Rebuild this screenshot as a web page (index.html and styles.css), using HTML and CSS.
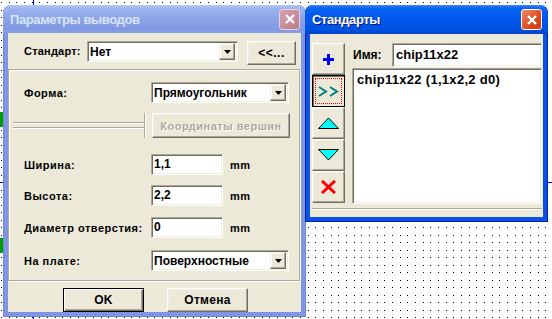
FILE: index.html
```html
<!DOCTYPE html>
<html lang="ru">
<head>
    <meta charset="UTF-8">
    <title>Параметры выводов</title>
    <link rel="stylesheet" href="styles.css">
</head>
<body>

<div class="desktop">
    <svg class="canvas" width="552" height="319">
        <line x1="33.5" y1="0" x2="33.5" y2="319" stroke="#0000ff"/>
        <line x1="0" y1="182.5" x2="552" y2="182.5" stroke="#0000ff"/>
        <rect x="0" y="112" width="4" height="15" fill="#00a000"/>
        <rect x="0" y="238" width="4" height="15" fill="#00a000"/>
    </svg>

    <!-- Параметры выводов (неактивное окно) -->
    <div class="window win-params inactive">
        <div class="titlebar">
            <span class="title">Параметры выводов</span>
            <span class="close">
                <svg width="10" height="10"><path d="M1 1L9 9M9 1L1 9" stroke="#fff" stroke-width="2.4"/></svg>
            </span>
        </div>
        <div class="client">
            <div class="std-row">
                <span class="label std-label">Стандарт:</span>
                <div class="combo combo-std">
                    <span class="combo-text">Нет</span>
                    <span class="combo-btn"><svg width="7" height="4"><path d="M0 0h7L3.5 4z"/></svg></span>
                </div>
                <button class="btn btn-back">&lt;&lt;...</button>
            </div>

            <div class="panel">
                <div class="row row-shape">
                    <span class="label wide">Форма:</span>
                    <div class="combo combo-wide">
                        <span class="combo-text">Прямоугольник</span>
                        <span class="combo-btn"><svg width="7" height="4"><path d="M0 0h7L3.5 4z"/></svg></span>
                    </div>
                </div>
                <div class="row row-coords">
                    <div class="etch">
                        <div class="etch-line"></div>
                        <div class="etch-line"></div>
                    </div>
                    <button class="btn btn-coords" disabled>Координаты вершин</button>
                </div>
                <div class="row row-width">
                    <span class="label wide">Ширина:</span>
                    <div class="edit">1,1</div>
                    <span class="unit">mm</span>
                </div>
                <div class="row row-height">
                    <span class="label wide">Высота:</span>
                    <div class="edit">2,2</div>
                    <span class="unit">mm</span>
                </div>
                <div class="row row-hole">
                    <span class="label wide">Диаметр отверстия:</span>
                    <div class="edit">0</div>
                    <span class="unit">mm</span>
                </div>
                <div class="row row-side">
                    <span class="label wide">На плате:</span>
                    <div class="combo combo-wide">
                        <span class="combo-text">Поверхностные</span>
                        <span class="combo-btn"><svg width="7" height="4"><path d="M0 0h7L3.5 4z"/></svg></span>
                    </div>
                </div>
            </div>

            <div class="actions">
                <button class="btn btn-default">OK</button>
                <button class="btn btn-cancel">Отмена</button>
            </div>
        </div>
    </div>

    <!-- Стандарты (активное окно) -->
    <div class="window win-std active">
        <div class="titlebar">
            <span class="title">Стандарты</span>
            <span class="close">
                <svg width="10" height="10"><path d="M1 1L9 9M9 1L1 9" stroke="#fff" stroke-width="2.4"/></svg>
            </span>
        </div>
        <div class="client client-std">
            <div class="std-main">
                <div class="toolbar">
                    <button class="tool">
                        <svg width="11" height="11"><path d="M4 0h3v11H4zM0 4h11v3H0z" fill="#0000ff"/></svg>
                    </button>
                    <button class="tool pressed">
                        <span class="focus">
                            <svg width="22" height="11"><path d="M1 1L8 5.5L1 10M12 1L19 5.5L12 10" fill="none" stroke="#008080" stroke-width="2"/></svg>
                        </span>
                    </button>
                    <button class="tool">
                        <svg width="21" height="12"><path d="M0.5 11.5L10.5 1L20.5 11.5z" fill="#00ffff" stroke="#000"/></svg>
                    </button>
                    <button class="tool">
                        <svg width="21" height="12"><path d="M0.5 0.5L10.5 11L20.5 0.5z" fill="#00ffff" stroke="#000"/></svg>
                    </button>
                    <button class="tool">
                        <svg width="15" height="14"><path d="M1 1L14 13M14 1L1 13" stroke="#ff0000" stroke-width="3"/></svg>
                    </button>
                </div>
                <div class="std-side">
                    <div class="name-row">
                        <span class="label name-label">Имя:</span>
                        <div class="edit edit-name">chip11x22</div>
                    </div>
                    <div class="listbox">
                        <div class="list-item">chip11x22 (1,1x2,2 d0)</div>
                    </div>
                </div>
            </div>
            <div class="separator"></div>
        </div>
    </div>
</div>

</body>
</html>
```

FILE: styles.css
```css
body {
    margin: 0;
    font-family: "Liberation Sans", Arial, sans-serif;
    color: #000;
}

.desktop {
    position: relative;
    width: 552px;
    height: 319px;
    overflow: hidden;
    background: #fff;
}

/* сетка точек: вертикальные линии, обрезанные маской из горизонтальных.
   шаг ~7.6px (8/7/8 по x, 8/7 по y) */
.desktop::before {
    content: "";
    position: absolute;
    inset: 0;
    background-image:
        linear-gradient(90deg, #000 1px, transparent 1px),
        linear-gradient(90deg, #000 1px, transparent 1px),
        linear-gradient(90deg, #000 1px, transparent 1px);
    background-size: 23px 100%;
    background-position: 1px 0, 9px 0, 16px 0;
    -webkit-mask-image:
        linear-gradient(#000 1px, transparent 1px),
        linear-gradient(#000 1px, transparent 1px);
    -webkit-mask-size: 100% 15px;
    -webkit-mask-position: 0 2px, 0 10px;
    mask-image:
        linear-gradient(#000 1px, transparent 1px),
        linear-gradient(#000 1px, transparent 1px);
    mask-size: 100% 15px;
    mask-position: 0 2px, 0 10px;
}

.canvas {
    position: absolute;
    left: 0;
    top: 0;
    shape-rendering: crispEdges;
}

/* windows */
.window {
    position: absolute;
    box-sizing: border-box;
    display: flex;
    flex-direction: column;
    padding: 0 4px 4px;
    border-radius: 8px 8px 0 0;
}

.win-params {
    left: 3px;
    top: 5px;
    width: 303px;
    height: 312px;
    background: #8196e2;
    border: 1px solid #6f86d8;
    border-top: none;
}

.win-std {
    left: 305px;
    top: 5px;
    width: 243px;
    height: 217px;
    background: #0a52e4;
    border: 1px solid #0022b8;
    border-top: none;
}

.titlebar {
    height: 29px;
    margin: 0 -5px;
    padding: 0 6px 0 7px;
    display: flex;
    align-items: center;
    justify-content: space-between;
    border-radius: 8px 8px 0 0;
}

.inactive .titlebar {
    background: linear-gradient(to bottom, #b5c8f4 0, #9db4ee 3px, #8fa8ea 40%, #7f99e3 85%, #8aa0e4 100%);
}

.active .titlebar {
    background: linear-gradient(to bottom, #3d8cff 0, #0b63f0 3px, #0058ee 40%, #0052e0 85%, #0042c6 100%);
}

.title {
    font-size: 13px;
    font-weight: bold;
    letter-spacing: -0.4px;
}

.inactive .title {
    color: #d8e4f8;
}

.active .title {
    color: #fff;
    text-shadow: 1px 1px #0a1883;
}

.close {
    width: 19px;
    height: 19px;
    border: 1px solid #fff;
    border-radius: 3px;
    display: flex;
    align-items: center;
    justify-content: center;
}

.inactive .close {
    background: linear-gradient(135deg, #d8a0ac, #bb7d8c);
    border-color: #e6d0e4;
}

.active .close {
    background: linear-gradient(135deg, #f08c6c, #dc4a22 60%, #c83c16);
}

.client {
    flex: 1;
    background: #ece9d8;
    display: flex;
    flex-direction: column;
}

/* common controls */
.label {
    font-size: 11px;
    font-weight: bold;
    letter-spacing: 0.5px;
    white-space: nowrap;
}

.btn {
    box-sizing: border-box;
    background: #ece9d8;
    border: 1px solid;
    border-color: #fff #716f64 #716f64 #fff;
    box-shadow: inset -1px -1px #aca899, inset 1px 1px #f1efe2;
    font-family: "Liberation Sans", Arial, sans-serif;
    font-size: 11px;
    font-weight: bold;
    letter-spacing: 0.5px;
    padding: 0;
    color: #000;
}

.edit,
.combo,
.listbox {
    box-sizing: border-box;
    background: #fff;
    border: 1px solid;
    border-color: #aca899 #fff #fff #aca899;
    box-shadow: inset 1px 1px #716f64, inset -1px -1px #f1efe2;
}

.edit {
    width: 72px;
    height: 21px;
    padding: 0 2px;
    font-size: 12px;
    font-weight: bold;
    line-height: 19px;
}

.combo {
    height: 21px;
    display: flex;
    align-items: center;
    padding: 2px;
}

.combo-text {
    flex: 1;
    font-size: 12px;
    font-weight: bold;
}

.combo-btn {
    box-sizing: border-box;
    width: 16px;
    height: 17px;
    background: #ece9d8;
    border: 1px solid;
    border-color: #f1efe2 #716f64 #716f64 #f1efe2;
    box-shadow: inset -1px -1px #aca899, inset 1px 1px #fff;
    display: flex;
    align-items: center;
    justify-content: center;
}

.unit {
    margin-left: 7px;
    font-size: 11px;
    font-weight: bold;
    letter-spacing: 0.5px;
}

/* Параметры выводов */
.std-row {
    display: flex;
    align-items: flex-start;
    padding: 8px 0 0 16px;
}

.std-label {
    width: 63px;
    line-height: 21px;
    letter-spacing: 0.2px;
}

.combo-std {
    width: 151px;
}

.btn-back {
    width: 49px;
    height: 24px;
    margin-left: 9px;
    font-size: 12px;
}

.panel {
    box-sizing: border-box;
    height: 212px;
    margin: 4px 1px 0 0;
    border: 1px solid #aca899;
    box-shadow: inset 1px 1px #fff, 1px 1px #fff;
    display: flex;
    flex-direction: column;
}

.row {
    display: flex;
    align-items: center;
    height: 21px;
    padding-left: 15px;
}

.label.wide {
    width: 127px;
}

.combo-wide {
    width: 138px;
}

.row-shape {
    margin-top: 12px;
}

.row-coords {
    height: 25px;
    margin-top: 10px;
    padding-left: 4px;
}

.etch {
    box-sizing: border-box;
    width: 132px;
    height: 25px;
    display: flex;
    flex-direction: column;
    justify-content: center;
    gap: 3px;
    border-right: 1px solid #aca899;
    box-shadow: 1px 0 #fff;
}

.etch-line {
    height: 1px;
    background: #aca899;
    border-bottom: 1px solid #fff;
}

.btn-coords {
    width: 138px;
    height: 25px;
    margin-left: 7px;
    color: #aca899;
    text-shadow: 1px 1px #fff;
}

.row-width {
    margin-top: 16px;
}

.row-height {
    margin-top: 10px;
}

.row-hole {
    margin-top: 11px;
}

.row-side {
    margin-top: 12px;
}

.actions {
    display: flex;
    gap: 23px;
    padding: 7px 0 0 55px;
}

.actions .btn {
    width: 81px;
    height: 24px;
    font-size: 12px;
    letter-spacing: 0.3px;
}

.btn-default {
    border-color: #000;
    box-shadow: inset 1px 1px #fff, inset -1px -1px #716f64, inset -2px -2px #aca899;
}

/* Стандарты */
.client-std {
    padding: 9px 1px 0 2px;
}

.std-main {
    display: flex;
    gap: 7px;
}

.toolbar {
    width: 33px;
    display: flex;
    flex-direction: column;
}

.tool {
    box-sizing: border-box;
    width: 33px;
    height: 32px;
    padding: 0;
    background: #ece9d8;
    border: 1px solid;
    border-color: #fff #716f64 #716f64 #fff;
    box-shadow: inset -1px -1px #aca899, inset 1px 1px #f1efe2;
    display: flex;
    align-items: center;
    justify-content: center;
}

.tool.pressed {
    border-color: #000;
    box-shadow: inset 1px 1px #716f64;
}

.focus {
    width: 25px;
    height: 24px;
    border: 1px dotted #e00000;
    display: flex;
    align-items: center;
    justify-content: center;
}

.std-side {
    flex: 1;
    display: flex;
    flex-direction: column;
    gap: 1px;
}

.name-row {
    display: flex;
    align-items: center;
    height: 24px;
}

.name-label {
    width: 39px;
    padding-left: 1px;
    font-size: 12px;
    letter-spacing: 0;
}

.edit-name {
    flex: 1;
    height: 24px;
    padding: 0 3px;
    font-size: 13px;
    line-height: 22px;
}

.listbox {
    height: 136px;
    padding: 3px 4px;
}

.list-item {
    font-size: 13px;
    font-weight: bold;
    letter-spacing: 0.3px;
    line-height: 16px;
}

.separator {
    margin-top: 4px;
    height: 1px;
    background: #aca899;
    border-bottom: 1px solid #fff;
}
```
